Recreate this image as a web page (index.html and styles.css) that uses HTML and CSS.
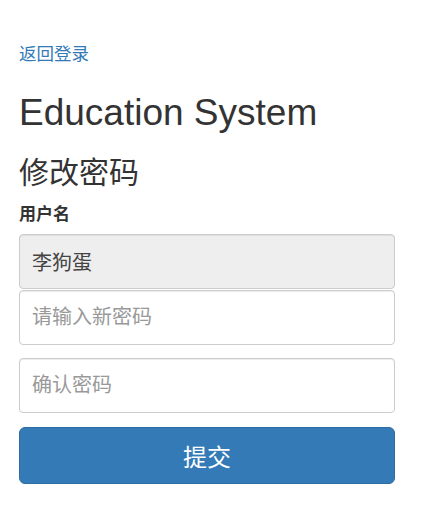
FILE: index.html
```html
<!DOCTYPE html>
<html lang="zh-CN">
<head>
<meta charset="utf-8">
<title>修改密码</title>
<link rel="stylesheet" href="styles.css">
</head>
<body>
<div class="page">
  <a class="back" href="#">返回登录</a>
  <h1 class="title">Education System</h1>
  <h2 class="subtitle">修改密码</h2>
  <form class="form">
    <label class="label">用户名</label>
    <input class="field field-readonly" type="text" value="李狗蛋" readonly>
    <input class="field" type="password" placeholder="请输入新密码">
    <input class="field field-gap" type="password" placeholder="确认密码">
    <button class="submit" type="button">提交</button>
  </form>
</div>
</body>
</html>
```

FILE: styles.css
```css
html, body {
  margin: 0;
  padding: 0;
  background: #fff;
}
body {
  font-family: "Liberation Sans", "Noto Sans CJK SC", sans-serif;
  color: #333;
}
.page {
  width: 376px;
  padding: 0 30px 0 19px;
}
.back {
  display: block;
  margin-top: 42px;
  font-size: 17.5px;
  line-height: 25px;
  color: #337ab7;
  text-decoration: none;
}
.title {
  margin: 26px 0 0;
  font-size: 37px;
  font-weight: normal;
  line-height: 40px;
}
.subtitle {
  margin: 20px 0 0;
  font-size: 30px;
  font-weight: normal;
  line-height: 40px;
}
.form {
  display: flex;
  flex-direction: column;
}
.label {
  font-size: 17px;
  font-weight: bold;
  line-height: 22px;
  margin: 11px 0 8px;
}
.field {
  box-sizing: border-box;
  width: 100%;
  height: 55px;
  margin: 0;
  padding: 0 12px;
  border: 1px solid #ccc;
  border-radius: 4px;
  font-family: "Liberation Sans", "Noto Sans CJK SC", sans-serif;
  font-size: 20px;
  color: #555;
  background: #fff;
  box-shadow: inset 0 1px 1px rgba(0,0,0,.075);
  outline: none;
}
.field::placeholder {
  color: #999;
}
.field-readonly {
  background: #eee;
  color: #444;
  margin-bottom: 1px;
}
.field-gap {
  margin-top: 13px;
}
.submit {
  box-sizing: border-box;
  width: 100%;
  height: 57px;
  margin-top: 14px;
  border: 1px solid #2e6da4;
  border-radius: 6px;
  background: #337ab7;
  color: #fff;
  font-family: "Liberation Sans", "Noto Sans CJK SC", sans-serif;
  font-size: 24px;
  cursor: pointer;
}
```
